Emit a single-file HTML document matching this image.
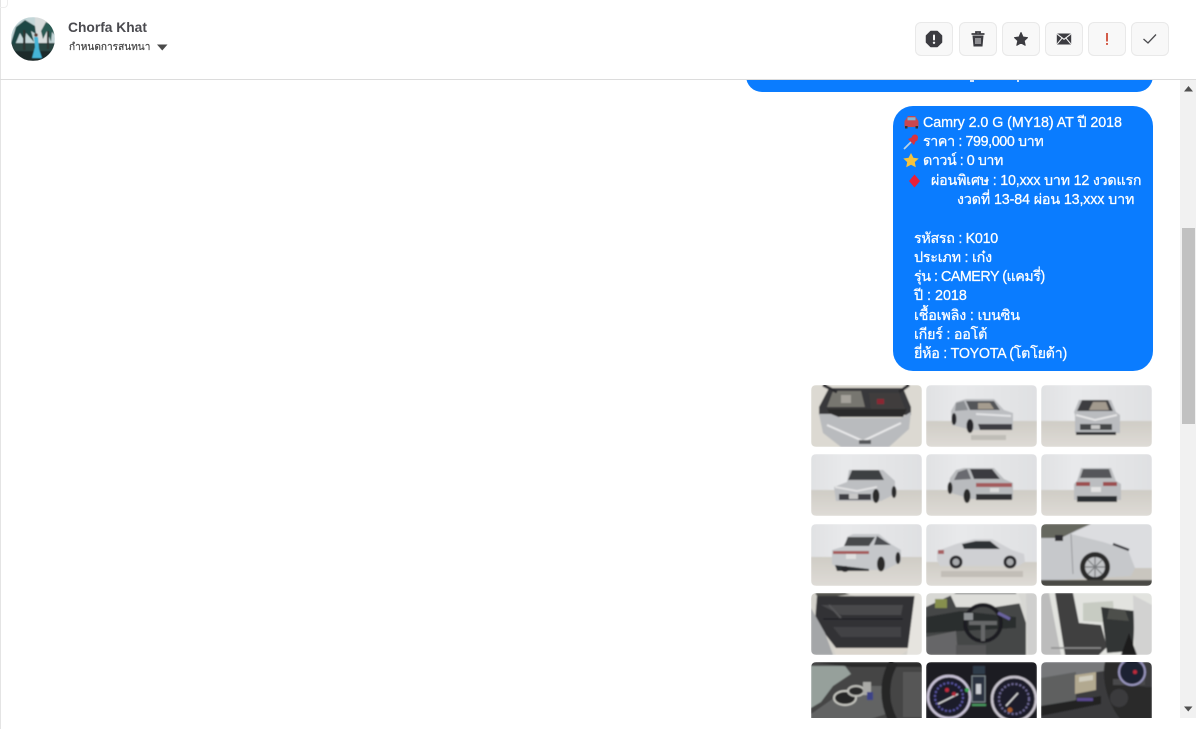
<!DOCTYPE html>
<html><head><meta charset="utf-8">
<style>
html,body{margin:0;padding:0;width:1196px;height:729px;overflow:hidden;background:#fff}
body{position:relative;font-family:"Liberation Sans","DejaVu Sans","Noto Sans CJK SC",sans-serif}
.a{position:absolute}
.l{position:absolute;color:#fff;font-size:14.3px;line-height:19px;height:19px;white-space:nowrap;-webkit-text-stroke:.25px #fff}
.b{position:absolute;top:22px;width:36px;height:32px;background:#f8f8f8;border:1px solid #e9e9e9;border-radius:6px}
.b svg{position:absolute;left:8px;top:6px}
</style></head><body>

<div class="a" style="left:0;top:0;width:1px;height:729px;background:#e4e4e4"></div>

<!-- clipped previous bubble -->
<div class="a" style="left:746px;top:60px;width:407px;height:32px;background:#0a7cff;border-radius:20px"></div>
<div class="a" style="left:970px;top:80px;width:4px;height:2px;background:#cfe4ff"></div>
<div class="a" style="left:1017px;top:80px;width:2px;height:2px;background:#cfe4ff"></div>

<!-- header -->
<div class="a" style="left:1px;top:0;width:1195px;height:79px;background:#fff"></div>
<div class="a" style="left:0;top:0;width:8px;height:8px;border:1px solid #eee;border-top:0;border-left:0;border-radius:0 0 4px 0;box-sizing:border-box"></div>
<div class="a" style="left:0;top:79px;width:1196px;height:1px;background:#dcdcdc"></div>

<svg class="a" style="left:11px;top:17px" width="44" height="44" viewBox="0 0 44 44">
<defs><clipPath id="av"><circle cx="22" cy="22" r="22"/></clipPath><filter id="av2"><feGaussianBlur stdDeviation=".6"/></filter></defs>
<g clip-path="url(#av)"><g filter="url(#av2)">
<rect width="44" height="44" fill="#c3d6d8"/>
<rect x="24" y="0" width="14" height="30" fill="#d8dcdc"/>
<rect x="0" y="26" width="44" height="18" fill="#2c4543"/>
<rect x="0" y="34" width="44" height="10" fill="#1a2a2a"/>
<path d="M0 26 L5 10 L14 3 L24 9 L25 17 L20 14 L23 25 L15 16 L14 25 L9 16 L4 28Z" fill="#1f4644"/>
<rect x="12" y="13" width="2.400" height="20" fill="#2d3432"/>
<path d="M30 14 L35 5 L41 8 L44 18 L41 15 L40 25 L36 14 L32 22Z" fill="#2b5a52"/>
<rect x="36" y="14" width="2" height="18" fill="#2d3432"/>
<path d="M23 20 L27 20 L28 32 L31 41 L21 41 L24 30Z" fill="#44b5d8"/>
<circle cx="25" cy="18" r="1.800" fill="#5a3b33"/>
</g></g></svg>

<div class="a" style="left:68px;top:19px;font-size:13.800px;line-height:17px;font-weight:bold;color:#4a4a4f;letter-spacing:0;white-space:nowrap">Chorfa Khat</div>
<div class="a" style="left:69px;top:41px;font-size:10.100px;line-height:13px;color:#444;white-space:nowrap;-webkit-text-stroke:.2px #444">กำหนดการสนทนา</div>
<svg class="a" style="left:157px;top:44px" width="11" height="7"><path d="M0 .5H10.500L5.250 6.500Z" fill="#4a4a4a"/></svg>

<!-- action buttons -->
<div class="b" style="left:915px"><svg width="20" height="20" viewBox="0 0 20 20"><path d="M6.800 2.500H13.200L17.500 6.800V13.200L13.200 17.500H6.800L2.500 13.200V6.800Z" fill="#3c3c41" stroke="#3c3c41" stroke-linejoin="round" stroke-width="1.500"/><rect x="9" y="5.500" width="2" height="6" rx="1" fill="#f8f8f8"/><circle cx="10" cy="13.800" r="1.200" fill="#f8f8f8"/></svg></div>
<div class="b" style="left:959px"><svg width="20" height="20" viewBox="0 0 20 20"><path d="M3.500 5H16.500M8 4.500V3H12V4.500" stroke="#3c3c41" stroke-width="1.800" fill="none"/><path d="M4.500 6.500H15.500L14.500 17.500H5.500Z" fill="#3c3c41"/><path d="M8 9V15M10 9V15M12 9V15" stroke="#f8f8f8" stroke-width=".9"/></svg></div>
<div class="b" style="left:1002px"><svg width="20" height="20" viewBox="0 0 20 20"><path d="M10 3.500L12 8L16.500 8.600L13.200 11.700L14.200 16.300L10 13.900L5.800 16.300L6.800 11.700L3.500 8.600L8 8Z" fill="#3c3c41" stroke="#3c3c41" stroke-linejoin="round"/></svg></div>
<div class="b" style="left:1045px"><svg width="20" height="20" viewBox="0 0 20 20"><rect x="2.800" y="4.500" width="14.400" height="11" rx="1.300" fill="#3c3c41"/><path d="M3.300 5.200L10 10.300L16.700 5.200M3.300 14.800L8 9.200M16.700 14.800L12 9.200" stroke="#f8f8f8" stroke-width="1.100" fill="none"/></svg></div>
<div class="b" style="left:1088px"><svg width="20" height="20" viewBox="0 0 20 20"><rect x="9.100" y="4" width="1.800" height="8.500" fill="#cf4b36"/><rect x="9.100" y="14" width="1.800" height="1.900" fill="#cf4b36"/></svg></div>
<div class="b" style="left:1131px"><svg width="20" height="20" viewBox="0 0 20 20"><path d="M3.500 10L8 14L16 5.500" stroke="#4a4a4e" stroke-width="1.300" fill="none"/></svg></div>

<!-- main bubble -->
<div class="a" style="left:893px;top:106px;width:260px;height:265px;background:#0a7cff;border-radius:20px"></div>

<svg class="a" style="left:903px;top:114px" width="18" height="58" viewBox="0 0 18 58">
<path d="M3 5L5 2H12L14 5L15.500 7V13H1.500V7Z" fill="#c8474f"/><rect x="4.500" y="3.300" width="8" height="3" fill="#7fb6d8"/><rect x="2" y="12" width="2.500" height="2.500" fill="#333"/><rect x="12.500" y="12" width="2.500" height="2.500" fill="#333"/>
<path d="M1 35L8 28" stroke="#b9d3e6" stroke-width="1.800"/><path d="M5 25L11 31L12.500 27.500L15 26L10 21L8.500 23.500Z" fill="#d8333f"/><circle cx="12" cy="23.500" r="3" fill="#d8333f"/>
<path d="M8 39L10.400 43.800L15.700 44.500L11.800 48.100L12.800 53.300L8 50.800L3.200 53.300L4.200 48.100L.3 44.500L5.600 43.800Z" fill="#f4c33e"/>
</svg>
<svg class="a" style="left:907px;top:173px" width="15" height="16" viewBox="0 0 15 16"><path d="M7.500 1.500L13 8L7.500 14.500L2 8Z" fill="#e8203a"/></svg>

<div class="l" style="left:923px;top:114px;letter-spacing:-.07px">Camry 2.0 G (MY18) AT ปี 2018</div>
<div class="l" style="left:923px;top:133px;letter-spacing:-.39px">ราคา : 799,000 บาท</div>
<div class="l" style="left:923px;top:152px;letter-spacing:-.46px">ดาวน์ : 0 บาท</div>
<div class="l" style="left:931px;top:172px;letter-spacing:-.22px">ผ่อนพิเศษ : 10,xxx บาท 12 งวดแรก</div>
<div class="l" style="left:957px;top:191px;letter-spacing:-.14px">งวดที่ 13-84 ผ่อน 13,xxx บาท</div>
<div class="l" style="left:914px;top:230px;letter-spacing:-.3px">รหัสรถ : K010</div>
<div class="l" style="left:914px;top:249px;letter-spacing:-.23px">ประเภท : เก๋ง</div>
<div class="l" style="left:914px;top:268px;letter-spacing:-.48px">รุ่น : CAMERY (แคมรี่)</div>
<div class="l" style="left:914px;top:287px">ปี : 2018</div>
<div class="l" style="left:914px;top:307px;letter-spacing:-.17px">เชื้อเพลิง : เบนซิน</div>
<div class="l" style="left:914px;top:326px;letter-spacing:-.23px">เกียร์ : ออโต้</div>
<div class="l" style="left:914px;top:345px;letter-spacing:-.28px">ยี่ห้อ : TOYOTA (โตโยต้า)</div>

<!-- photo grid -->
<svg class="a" style="left:805px;top:380px" width="352" height="338" viewBox="805 380 352 338">
<defs>
<filter id="bl" x="-5%" y="-5%" width="110%" height="110%"><feGaussianBlur stdDeviation=".9"/></filter>
<clipPath id="r"><rect width="111" height="62" rx="5"/></clipPath>
<linearGradient id="wall" x1="0" y1="0" x2="1" y2="0"><stop offset="0" stop-color="#e0e1e3"/><stop offset=".3" stop-color="#e8e9eb"/><stop offset="1" stop-color="#dfe0e2"/></linearGradient>
<linearGradient id="floor" x1="0" y1="0" x2="0" y2="1"><stop offset="0" stop-color="#cfccc5"/><stop offset="1" stop-color="#dedbd6"/></linearGradient>
<g id="room"><rect width="111" height="62" fill="url(#wall)"/><rect y="36" width="111" height="26" fill="url(#floor)"/></g>
</defs>

<!-- row 1 -->
<g transform="translate(811,385)" clip-path="url(#r)"><g filter="url(#bl)">
<rect width="111" height="62" fill="#dcd9d2"/>
<path d="M8 22L18 3H92L100 22L100 30H8Z" fill="#39393b"/>
<path d="M22 6H50L54 22H16Z" fill="#77766f"/><path d="M58 8H88L94 24H60Z" fill="#3f3c3d"/><rect x="66" y="14" width="7" height="5" fill="#8c2730"/><rect x="30" y="10" width="10" height="8" fill="#a5a29b"/>
<path d="M12 0L26 7M88 7L98 0" stroke="#2c2c2e" stroke-width="3"/>
<path d="M16 24H96L92 32H20Z" fill="#2a2a2c"/>
<path d="M8 29H20L30 33H90L100 27L98 44L78 62H30L12 48Z" fill="#b9bbbe"/>
<path d="M16 40L52 56L90 38" stroke="#e9e9ea" stroke-width="2" fill="none"/>
<rect x="48" y="55" width="12" height="4" fill="#55565a"/>
</g></g>

<g transform="translate(926,385)" clip-path="url(#r)"><g filter="url(#bl)">
<use href="#room"/>
<path d="M30 17L40 14H68L78 25L87 28L87 45H46L26 40L25 26Z" fill="#bcbec1"/>
<path d="M40 16H68L74 25H44Z" fill="#535459"/><path d="M52 18H64L68 24H52Z" fill="#a59c8f"/><path d="M30 18L38 16L42 25L29 26Z" fill="#8b8e92"/>
<path d="M52 39H86V45H54Z" fill="#3d3e42"/><path d="M50 29L85 31" stroke="#e3e4e6" stroke-width="2"/>
<ellipse cx="44" cy="41" rx="3.500" ry="7" fill="#28282a"/><ellipse cx="28" cy="34" rx="2.500" ry="6" fill="#28282a"/>
<rect x="45" y="50" width="35" height="5" fill="#bfbdb7"/>
</g></g>

<g transform="translate(1041,385)" clip-path="url(#r)"><g filter="url(#bl)">
<use href="#room"/>
<path d="M38 15H70L75 27L79 30V48H34V30L33 27Z" fill="#babcbf"/>
<path d="M41 15H67L72 26H36Z" fill="#3c3d41"/><path d="M52 17H65L68 25H48Z" fill="#a29a8e"/>
<path d="M35 30L54 35L76 30" stroke="#e5e5e6" stroke-width="2" fill="none"/><rect x="39" y="39" width="32" height="6" fill="#45464a"/><rect x="50" y="40" width="9" height="4" fill="#c9c9c9"/>
<rect x="35" y="47" width="40" height="3" fill="#2b2b2d"/>
</g></g>

<!-- row 2 -->
<g transform="translate(811,454)" clip-path="url(#r)"><g filter="url(#bl)">
<use href="#room"/>
<path d="M38 16H72L84 27L84 40L70 47H25L23 33L36 28Z" fill="#bdbfc2"/>
<path d="M41 16H68L73 26H37Z" fill="#3e3f43"/><path d="M28 40H60V46H28Z" fill="#3f4044"/>
<path d="M24 33L46 37L66 33" stroke="#e1e1e2" stroke-width="2" fill="none"/><rect x="38" y="40" width="9" height="5" fill="#c8c8c8"/>
<ellipse cx="65" cy="42" rx="3.500" ry="7" fill="#29292b"/><ellipse cx="83" cy="38" rx="2.500" ry="6" fill="#29292b"/>
</g></g>

<g transform="translate(926,454)" clip-path="url(#r)"><g filter="url(#bl)">
<use href="#room"/>
<path d="M30 16L38 14H68L78 25L87 29V45H45L22 38L24 24Z" fill="#b9bbbe"/>
<path d="M44 15H66L74 25H48Z" fill="#3a3b3f"/><path d="M32 18L41 15L45 25L28 26Z" fill="#696b6f"/>
<rect x="50" y="29" width="36" height="4" fill="#a45a5c"/><rect x="50" y="40" width="36" height="6" fill="#303134"/><rect x="64" y="34" width="9" height="4" fill="#ddd"/>
<ellipse cx="41" cy="42" rx="3.500" ry="7" fill="#29292b"/><ellipse cx="24" cy="34" rx="2.500" ry="6" fill="#29292b"/>
</g></g>

<g transform="translate(1041,454)" clip-path="url(#r)"><g filter="url(#bl)">
<use href="#room"/>
<path d="M40 14H70L75 27L80 30V46H33V30L36 27Z" fill="#bbbdc0"/>
<path d="M42 15H68L71 24H39Z" fill="#55565a"/>
<rect x="35" y="28" width="14" height="4" fill="#9b4e50"/><rect x="62" y="28" width="14" height="4" fill="#9b4e50"/><rect x="50" y="33" width="10" height="5" fill="#e2e2e2"/>
<rect x="36" y="42" width="40" height="6" fill="#2c2d30"/>
</g></g>

<!-- row 3 -->
<g transform="translate(811,524)" clip-path="url(#r)"><g filter="url(#bl)">
<rect width="111" height="62" fill="url(#wall)"/><rect y="33" width="111" height="29" fill="url(#floor)"/>
<path d="M36 13L42 10H68L80 20L90 26V38L74 46H28L21 40V26L34 22Z" fill="#c5c7ca"/>
<path d="M37 13H64L58 22H33Z" fill="#47484c"/><path d="M66 12L80 21H63Z" fill="#4c4d51"/>
<rect x="22" y="27" width="36" height="3" fill="#a45859"/><rect x="35" y="30" width="10" height="5" fill="#e0e0e0"/>
<path d="M24 41L58 45V47H26Z" fill="#2c2d30"/>
<ellipse cx="70" cy="40" rx="4" ry="7.500" fill="#2a2a2c"/><ellipse cx="87" cy="34" rx="2.500" ry="6" fill="#2a2a2c"/><ellipse cx="34" cy="45" rx="4" ry="3" fill="#28282a"/>
</g></g>

<g transform="translate(926,524)" clip-path="url(#r)"><g filter="url(#bl)">
<rect width="111" height="62" fill="url(#wall)"/><rect y="38" width="111" height="24" fill="url(#floor)"/>
<path d="M11 27L30 20L48 15H66L86 26L98 30L99 38L92 42H14L11 36Z" fill="#cfd0d3"/>
<path d="M36 20L50 17H64L74 25H38Z" fill="#2f3034"/><rect x="12" y="26" width="6" height="4" fill="#a86064"/>
<circle cx="30" cy="38" r="6.500" fill="#27272a"/><circle cx="30" cy="38" r="3.500" fill="#a9abad"/>
<circle cx="84" cy="38" r="6.500" fill="#27272a"/><circle cx="84" cy="38" r="3.500" fill="#a9abad"/>
<rect x="15" y="47" width="82" height="6" fill="#c2beb7"/>
</g></g>

<g transform="translate(1041,524)" clip-path="url(#r)"><g filter="url(#bl)">
<rect width="111" height="62" fill="#dcdde0"/><rect y="44" width="111" height="18" fill="#c9c6bf"/>
<path d="M0 0H50L30 10L62 18L87 26L94 44L90 52L20 56H0Z" fill="#c6c8cb"/>
<path d="M0 0H50L36 6L20 14H0Z" fill="#66675f"/><rect x="14" y="11" width="8" height="6" fill="#2e2f32"/>
<path d="M30 10L32 50" stroke="#96989b" stroke-width="1"/>
<circle cx="54" cy="43" r="15" fill="#29292b"/><circle cx="54" cy="43" r="10" fill="#c3c5c8"/><path d="M54 33V53M44 43H64M47 36L61 50M61 36L47 50" stroke="#77797c" stroke-width="1.200"/>
<path d="M0 56H111V62H0Z" fill="#4a4945"/><path d="M72 20L88 26" stroke="#3d3e42" stroke-width="2.500"/>
</g></g>

<!-- row 4 -->
<g transform="translate(811,593)" clip-path="url(#r)"><g filter="url(#bl)">
<rect width="111" height="62" fill="#d3d1cb"/>
<path d="M6 3H108L105 25L98 55H25L4 28Z" fill="#333335"/>
<path d="M4 0H50L26 3L6 3Z" fill="#55554f"/><path d="M34 0H108L105 3H44Z" fill="#dddcd6"/>
<path d="M10 12H92L90 22H30Z" fill="#49494c"/><path d="M18 12L30 25" stroke="#565658" stroke-width="2"/><path d="M22 34H90V44H30Z" fill="#424244"/><path d="M12 26H92" stroke="#242426" stroke-width="1.500"/>
<path d="M0 15L14 40L22 62H0Z" fill="#a4a6a8"/><path d="M22 55H100L90 62H25Z" fill="#dbd6cd"/><path d="M104 0L111 0V62H96Z" fill="#e6e4df"/>
</g></g>

<g transform="translate(926,593)" clip-path="url(#r)"><g filter="url(#bl)">
<rect width="111" height="62" fill="#d8d8d4"/>
<path d="M0 14L30 0H90L100 30V62H0Z" fill="#454647"/><path d="M24 1H92L96 10L70 14H30Z" fill="#dededa"/><rect x="9" y="6" width="12" height="9" fill="#868f4e"/>
<path d="M0 24L35 18L90 24V35L0 40Z" fill="#2c2d2e"/>
<circle cx="57" cy="30" r="18" fill="none" stroke="#1e1e20" stroke-width="4"/><path d="M43 30H71M57 30V48" stroke="#666769" stroke-width="4"/>
<rect x="38" y="20" width="9" height="7" fill="#8e9294"/><path d="M72 20L84 26" stroke="#6b64a0" stroke-width="3"/>
<path d="M0 44L30 38L32 62H0Z" fill="#666667"/><path d="M30 52H60V62H30Z" fill="#555557"/><path d="M100 0H111V62H102Z" fill="#cfcfce"/>
</g></g>

<g transform="translate(1041,593)" clip-path="url(#r)"><g filter="url(#bl)">
<rect width="111" height="62" fill="#e2e3df"/>
<path d="M0 0H8L20 62H0Z" fill="#bcbcbc"/>
<path d="M14 0H32L38 30L60 32L66 54L58 62H24Z" fill="#3f3f40"/>
<path d="M42 10L72 8L74 30L42 28Z" fill="#c7cbc2"/>
<path d="M60 14L94 18L92 58L66 60Z" fill="#333435"/><path d="M68 16L84 17L88 28L66 26Z" fill="#4d4f4c"/>
<path d="M92 2L111 12V62H94Z" fill="#d2d2d1"/><path d="M88 40L96 62H80Z" fill="#1e1e1f"/>
<path d="M10 55H60" stroke="#8e8e8e" stroke-width="1.500"/>
</g></g>

<!-- row 5 -->
<g transform="translate(811,662)" clip-path="url(#r)"><g filter="url(#bl)">
<rect width="111" height="62" fill="#444445"/>
<path d="M0 4H34L40 12L22 24L10 40L0 46Z" fill="#96a09b"/>
<path d="M0 0H111V5H40Z" fill="#2a2a2c"/>
<path d="M0 52L40 24H78L82 50L56 58L0 62Z" fill="#626363"/>
<ellipse cx="34" cy="36" rx="11" ry="7" fill="#252526" stroke="#c6c6c0" stroke-width="2"/><ellipse cx="45" cy="29" rx="8" ry="5" fill="#2a2a2b" stroke="#bdbdb8" stroke-width="2"/>
<rect x="52" y="20" width="8" height="13" fill="#aaaaa7"/><rect x="56" y="30" width="6" height="8" fill="#3d4288"/>
<path d="M83 0C72 18 72 42 84 62" fill="none" stroke="#262627" stroke-width="9"/><path d="M92 10H111V55H92Z" fill="#565657"/>
</g></g>

<g transform="translate(926,662)" clip-path="url(#r)"><g filter="url(#bl)">
<rect width="111" height="62" fill="#1b1c21"/>
<circle cx="23" cy="35" r="21" fill="#1b1c2c" stroke="#c9c3d8" stroke-width="2.500"/><circle cx="23" cy="35" r="14" fill="none" stroke="#5c58a8" stroke-width="2" stroke-dasharray="2 2"/><path d="M12 42L32 32" stroke="#ddd" stroke-width="1.500"/><circle cx="21" cy="28" r="2" fill="#c32a3c"/><circle cx="28" cy="32" r="2" fill="#b72a3a"/>
<circle cx="88" cy="37" r="22" fill="#1d1e2a" stroke="#c9c5cf" stroke-width="2.500"/><circle cx="88" cy="37" r="15" fill="none" stroke="#6f6a98" stroke-width="2" stroke-dasharray="2 2"/><path d="M80 44L92 31" stroke="#ddd" stroke-width="1.500"/><circle cx="84" cy="48" r="2.500" fill="#a65a2a"/>
<rect x="46" y="14" width="13" height="26" fill="#2a3040" stroke="#7f8a90" stroke-width="1"/><rect x="50" y="22" width="5" height="10" fill="#c9ccd2"/><rect x="47" y="4" width="12" height="8" fill="#2e3a48"/><circle cx="41" cy="28" r="2" fill="#3aa956"/><rect x="46" y="42" width="14" height="2" fill="#4b9a60"/>
</g></g>

<g transform="translate(1041,662)" clip-path="url(#r)"><g filter="url(#bl)">
<rect width="111" height="62" fill="#3a3b3c"/>
<path d="M0 0H70V8L0 18Z" fill="#77787a"/><path d="M0 16L35 10V40L0 44Z" fill="#5e6061"/>
<path d="M34 13L55 10V28L34 32Z" fill="#b2a990"/><path d="M38 15L52 13V18L38 20Z" fill="#d0cdbe"/>
<path d="M0 44L60 34V42L0 54Z" fill="#202022"/><rect x="36" y="36" width="16" height="3" fill="#5a4a90"/>
<path d="M64 0C60 15 66 45 84 62H111V25C90 25 80 20 84 0Z" fill="#2b2b2c"/>
<path d="M72 20L104 20" stroke="#4a4a4c" stroke-width="6"/><circle cx="78" cy="36" r="9" fill="#3b3b3d"/><circle cx="91" cy="10" r="13" fill="#1f2030" stroke="#9a97c0" stroke-width="2"/><circle cx="94" cy="10" r="2" fill="#bf2a3b"/>
</g></g>
</svg>

<!-- scrollbar -->
<div class="a" style="left:1180px;top:80px;width:16px;height:638px;background:#f1f1f1"></div>
<div class="a" style="left:1182px;top:228px;width:13px;height:196px;background:#c1c1c1"></div>
<svg class="a" style="left:1184px;top:86px" width="9" height="6"><path d="M4.500 0L9 5.500H0Z" fill="#505050"/></svg>
<svg class="a" style="left:1184px;top:706px" width="9" height="6"><path d="M0 .5H8.500L4.250 5.500Z" fill="#505050"/></svg>

</body></html>
